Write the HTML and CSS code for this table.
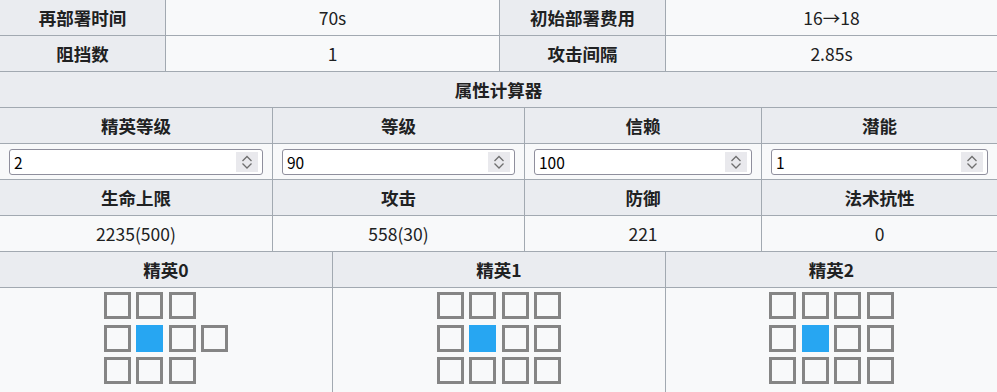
FILE: index.html
```html
<!DOCTYPE html>
<html lang="zh-CN">
<head>
    <meta charset="UTF-8">
    <title>干员属性</title>
    <link rel="stylesheet" href="styles.css">
</head>
<body>
    <div class="warp">
        <table class="wikitable info">
            <colgroup><col class="w166"><col class="w334"><col class="w166"><col></colgroup>
            <tr><th>再部署时间</th><td>70s</td><th>初始部署费用</th><td>16→18</td></tr>
            <tr><th>阻挡数</th><td>1</td><th>攻击间隔</th><td>2.85s</td></tr>
        </table>

        <table class="wikitable calc">
            <colgroup><col class="w273"><col class="w252"><col class="w237"><col></colgroup>
            <tr><th colspan="4">属性计算器</th></tr>
            <tr><th>精英等级</th><th>等级</th><th>信赖</th><th>潜能</th></tr>
            <tr class="inputs">
                <td><div class="num"><input id="elite" type="number" value="2" min="0" max="2"><span class="spin"></span></div></td>
                <td><div class="num"><input id="level" type="number" value="90" min="1" max="90"><span class="spin"></span></div></td>
                <td><div class="num"><input id="trust" type="number" value="100" min="0" max="200"><span class="spin"></span></div></td>
                <td><div class="num"><input id="potential" type="number" value="1" min="1" max="6"><span class="spin"></span></div></td>
            </tr>
            <tr><th>生命上限</th><th>攻击</th><th>防御</th><th>法术抗性</th></tr>
            <tr><td>2235(500)</td><td>558(30)</td><td>221</td><td>0</td></tr>
        </table>

        <table class="wikitable range">
            <colgroup><col class="w333"><col class="w333"><col></colgroup>
            <tr><th>精英0</th><th>精英1</th><th>精英2</th></tr>
            <tr>
                <td>
                    <div class="grid">
                        <span class="c"></span><span class="c"></span><span class="c"></span><span class="c no"></span>
                        <span class="c"></span><span class="c me"></span><span class="c"></span><span class="c"></span>
                        <span class="c"></span><span class="c"></span><span class="c"></span><span class="c no"></span>
                    </div>
                </td>
                <td>
                    <div class="grid">
                        <span class="c"></span><span class="c"></span><span class="c"></span><span class="c"></span>
                        <span class="c"></span><span class="c me"></span><span class="c"></span><span class="c"></span>
                        <span class="c"></span><span class="c"></span><span class="c"></span><span class="c"></span>
                    </div>
                </td>
                <td>
                    <div class="grid">
                        <span class="c"></span><span class="c"></span><span class="c"></span><span class="c"></span>
                        <span class="c"></span><span class="c me"></span><span class="c"></span><span class="c"></span>
                        <span class="c"></span><span class="c"></span><span class="c"></span><span class="c"></span>
                    </div>
                </td>
            </tr>
        </table>
    </div>
    <script>
        // 每个输入框右边画一个上下箭头
        var spins=document.querySelectorAll('.spin');
        for (var i = 0; i < spins.length; i++) {
            spins[i].innerHTML='<svg width="22" height="20" viewBox="0 0 22 20">'
                +'<polyline points="6.5,9 11,4.5 15.5,9" fill="none" stroke="#6f6f6f" stroke-width="1.3"/>'
                +'<polyline points="6.5,11.5 11,16 15.5,11.5" fill="none" stroke="#6f6f6f" stroke-width="1.3"/>'
                +'</svg>';
        }
    </script>
</body>
</html>
```

FILE: styles.css
```css
*{margin:0;padding: 0;}
body{
    background-color: #f8f9fa;
    color: #202122;
    font-family: "Noto Sans CJK SC", "Microsoft YaHei", sans-serif;
    font-size: 17.5px;
}
.warp{
    width: 997px;
}
.wikitable{
    width: 997px;
    table-layout: fixed;
    border-collapse: separate;
    border-spacing: 0;
}
.w166{width: 166px;}
.w334{width: 334px;}
.w273{width: 273px;}
.w252{width: 252px;}
.w237{width: 237px;}
.w333{width: 333px;}
.wikitable th,
.wikitable td{
    height: 35px;
    line-height: 35px;
    padding: 0;
    text-align: center;
    vertical-align: middle;
    border-right: 1px solid #a2a9b1;
    border-bottom: 1px solid #a2a9b1;
    white-space: nowrap;
}
.wikitable th:last-child,
.wikitable td:last-child{
    border-right: 0;
}
.wikitable th{
    background-color: #eaecf0;
    font-weight: bold;
}
.wikitable td{
    background-color: #f8f9fa;
    font-weight: normal;
}
.calc .inputs td{
    padding: 0 9px;
    line-height: normal;
}
.num{
    position: relative;
    height: 26px;
}
.num input{
    width: 100%;
    height: 26px;
    box-sizing: border-box;
    border: 1px solid #8f8f9d;
    border-radius: 3px;
    background-color: #fff;
    padding: 0 4px;
    font-family: "Noto Sans CJK SC", "Microsoft YaHei", sans-serif;
    font-size: 15.5px;
    color: #000;
    -moz-appearance: textfield;
}
.num input::-webkit-inner-spin-button,
.num input::-webkit-outer-spin-button{
    -webkit-appearance: none;
    margin: 0;
}
/* 假的上下箭头，盖在输入框右边 */
.spin{
    position: absolute;
    top: 3px;
    right: 5px;
    width: 22px;
    height: 20px;
    background-color: #e9e9ed;
    pointer-events: none;
}
.spin svg{
    display: block;
}
.range td{
    height: auto;
    line-height: normal;
    padding: 4px 0 8px;
}
.grid{
    display: inline-grid;
    grid-template-columns: repeat(4, 27px);
    grid-auto-rows: 27px;
    gap: 5.5px;
    vertical-align: top;
}
.grid .c{
    box-sizing: border-box;
    border: 3px solid #858585;
}
.grid .me{
    border: 0;
    background-color: #27a6f2;
}
.grid .no{
    border: 0;
}
```
